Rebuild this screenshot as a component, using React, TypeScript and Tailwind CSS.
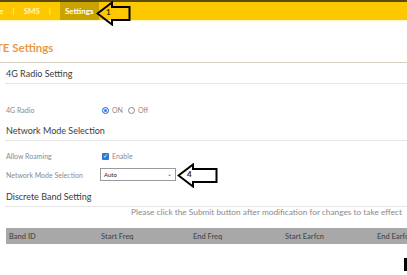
import React from "react";

const font = { fontFamily: "Lato, 'Open Sans', sans-serif" };

const ArrowLeft = ({ label, className, w }: { label: string; className: string; w: number }) => (
  <div className={`absolute ${className}`}>
    <svg width={w} height="25" viewBox={`0 0 ${w} 25`} className="absolute left-0 top-0">
      <path
        d={`M1.5 12.5 L16 1.5 L16 6 L${w - 1.5} 6 L${w - 1.5} 19 L16 19 L16 23.5 Z`}
        fill="none"
        stroke="#000"
        strokeWidth="2"
      />
    </svg>
    <span className="absolute left-[10px] top-[7px] text-[8px] font-bold leading-none text-[#3a2a00]">
      {label}
    </span>
  </div>
);

const Section = ({ title }: { title: string }) => (
  <div className="ml-[5px] flex h-[21px] items-center border-b border-[#e6e6e6] pl-[1px] text-[9px] text-[#3c3c3c]">
    {title}
  </div>
);

export default function App() {
  const cols = ["Band ID", "Start Freq", "End Freq", "Start Earfcn", "End Earfcn"];
  return (
    <div className="relative h-[275px] w-[407px] overflow-hidden bg-white" style={font}>
      {/* top nav */}
      <div className="flex h-[20px] items-stretch border-t-2 border-[#5b4c12] bg-[#fdc800] text-[8px] font-bold text-[#fff4c4]">
        <span className="ml-[-18px] flex items-center">Home</span>
        <span className="mx-[9px] flex items-center font-normal">|</span>
        <span className="flex items-center">SMS</span>
        <span className="mx-[9px] flex items-center font-normal">|</span>
        <span className="flex items-center bg-[#c9a300] px-[5px] text-white">Settings</span>
      </div>
      <div className="h-px bg-[#fff3c8]" />

      <div className="mt-[18px] ml-[-9px] text-[11.5px] font-bold text-[#e79b48]">LTE Settings</div>
      <div className="mt-[6px] h-px bg-[#d9d1bf]" />

      <Section title="4G Radio Setting" />
      <div className="mt-[20px] flex h-[12px] items-center text-[7px] text-[#8a8a8a]">
        <span className="ml-[6px] w-[96px]">4G Radio</span>
        <span className="flex items-center gap-[3px]">
          <span className="h-[7px] w-[7px] rounded-full border border-[#3a7bd5] bg-[#3a7bd5] ring-1 ring-inset ring-white" />
          ON
        </span>
        <span className="ml-[5px] flex items-center gap-[3px]">
          <span className="h-[7px] w-[7px] rounded-full border border-[#888]" />
          Off
        </span>
      </div>
      <div className="mt-[4px]">
        <Section title="Network Mode Selection" />
      </div>
      <div className="mt-[9px] flex h-[12px] items-center text-[7px] text-[#8a8a8a]">
        <span className="ml-[6px] w-[96px]">Allow Roaming</span>
        <span className="flex items-center gap-[3px]">
          <span className="flex h-[7px] w-[7px] items-center justify-center rounded-[1px] bg-[#2f7ad1] text-[6px] leading-none text-white">
            ✓
          </span>
          Enable
        </span>
      </div>
      <div className="mt-[6px] flex h-[13px] items-center text-[7px] text-[#8a8a8a]">
        <span className="ml-[6px] w-[94px]">Network Mode Selection</span>
        <span className="flex h-[13px] w-[76px] items-center justify-between border border-[#9a9a9a] px-[3px] text-[6px] text-[#222]">
          Auto
          <span className="mb-[3px] text-[6px] text-[#444]">⌄</span>
        </span>
      </div>
      <div className="mt-[5px]">
        <Section title="Discrete Band Setting" />
      </div>
      <div className="pl-[131px] text-[8.3px] leading-[10px] text-[#8a8a8a] whitespace-nowrap">
        Please click the Submit button after modification for changes to take effect
      </div>
      <div className="mt-[11px] ml-[6px] flex h-[16px] items-center bg-[#a8a8a9] text-[7.5px] font-semibold text-[#4e4e4e] whitespace-nowrap">
        {cols.map((c) => (
          <span key={c} className="w-[92px] shrink-0 pl-[3px]">
            {c}
          </span>
        ))}
      </div>

      <div className="absolute left-[404px] top-[258px] h-[13px] w-[3px] bg-black" />

      <ArrowLeft label="1" w={35} className="left-[96px] top-[1px] h-[25px] w-[35px]" />
      <ArrowLeft label="4" w={41} className="left-[177px] top-[163px] h-[25px] w-[41px]" />
    </div>
  );
}
